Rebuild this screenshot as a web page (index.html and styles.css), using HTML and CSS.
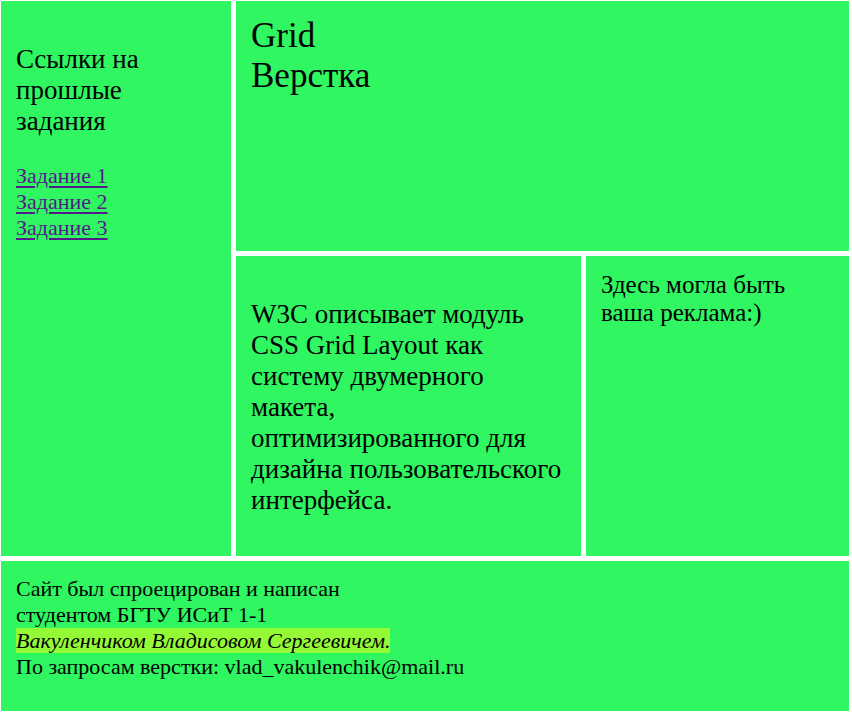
FILE: index.html
```html
<!DOCTYPE html>
<html lang="ru">
<head>
<meta charset="utf-8">
<title>Grid Верстка</title>
<link rel="stylesheet" href="styles.css">
</head>
<body>
<div class="layout">
  <nav class="panel sidebar">
    <p class="lead">Ссылки на прошлые задания</p>
    <a href="#task1">Задание 1</a><br>
    <a href="#task2">Задание 2</a><br>
    <a href="#task3">Задание 3</a>
  </nav>
  <header class="panel header">Grid<br>Верстка</header>
  <main class="panel content">
    <p class="lead">W3C описывает модуль CSS Grid Layout как систему двумерного макета, оптимизированного для дизайна пользовательского интерфейса.</p>
  </main>
  <aside class="panel ad">Здесь могла быть ваша реклама:)</aside>
  <footer class="panel footer">
    Сайт был спроецирован и написан<br>
    студентом БГТУ ИСиТ 1-1<br>
    <em class="author">Вакуленчиком Владисовом Сергеевичем.</em><br>
    По запросам верстки: vlad_vakulenchik@mail.ru
  </footer>
</div>
</body>
</html>
```
FILE: styles.css
```css
* {
  box-sizing: border-box;
}

body {
  margin: 0;
  font-family: "Liberation Serif", "Times New Roman", serif;
  color: #000;
  background: #fff;
}

.layout {
  display: grid;
  grid-template-columns: 230px 345fr 263fr;
  grid-template-rows: 250px 300px 150px;
  grid-template-areas:
    "sidebar header header"
    "sidebar content ad"
    "footer footer footer";
  gap: 5px;
  padding: 1px 3px 1px 1px;
}

.panel {
  padding: 15px;
  background: #2ff661;
}

.sidebar {
  grid-area: sidebar;
  font-size: 22px;
  line-height: 26px;
}

.header {
  grid-area: header;
  font-size: 35px;
  line-height: 40px;
}

.content {
  grid-area: content;
}

.ad {
  grid-area: ad;
  font-size: 25px;
  line-height: 28px;
}

.footer {
  grid-area: footer;
  font-size: 22px;
  line-height: 26px;
}

.lead {
  margin: 28px 0 26px;
  font-size: 27px;
  line-height: 31px;
}

a {
  color: #551a8b;
  text-decoration-thickness: 2px;
  text-underline-offset: 3px;
}

.author {
  background: #94fa36;
}
```
